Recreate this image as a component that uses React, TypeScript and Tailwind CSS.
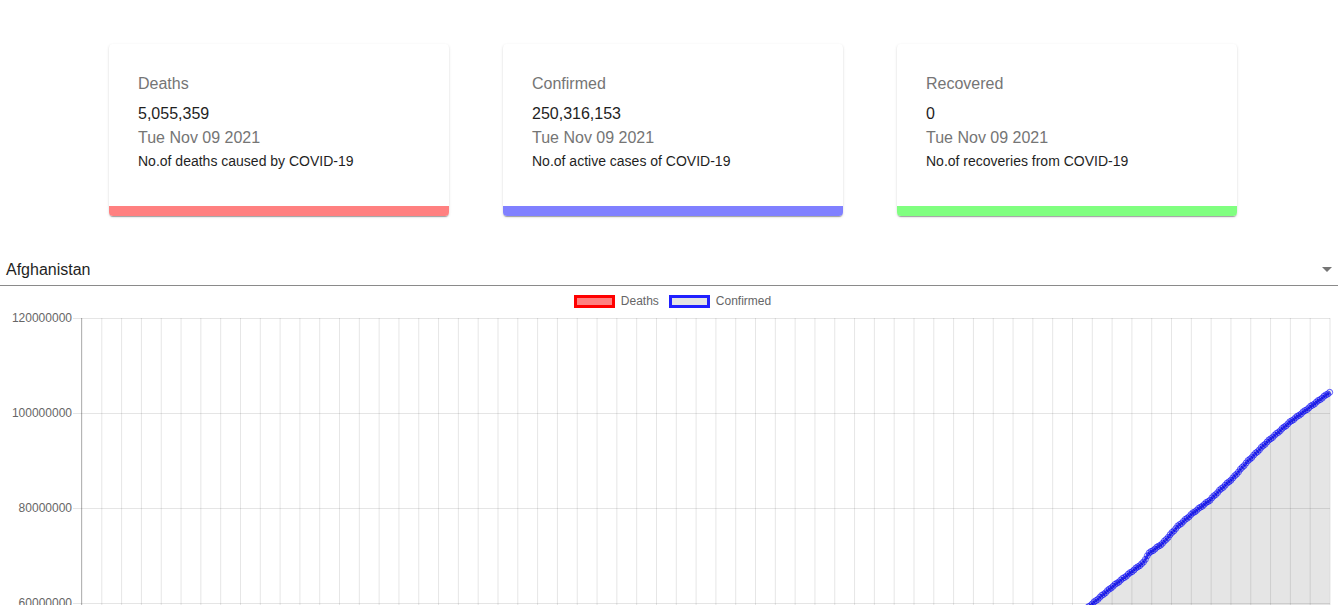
import React from 'react';

const font = { fontFamily: '"Liberation Sans", Arial, sans-serif' };

interface StatCardProps {
  title: string;
  value: string;
  caption: string;
  barClass: string;
}

function StatCard({ title, value, caption, barClass }: StatCardProps) {
  return (
    <div className="w-[340px] bg-white rounded-[4px] overflow-hidden shadow-[0px_2px_1px_-1px_rgba(0,0,0,0.2),0px_1px_1px_0px_rgba(0,0,0,0.14),0px_1px_3px_0px_rgba(0,0,0,0.12)]">
      <div className="pl-[29px] pr-4 pt-[28px] pb-[35px]">
        <div className="text-[16px] leading-[24px] text-[#757575]">{title}</div>
        <div className="mt-[6px] text-[16px] leading-[24px] text-[#1f1f1f]">{value}</div>
        <div className="text-[16px] leading-[24px] text-[#757575]">Tue Nov 09 2021</div>
        <div className="mt-[1px] text-[14px] leading-[20px] text-[#1f1f1f]">{caption}</div>
      </div>
      <div className={`h-[10px] ${barClass}`} />
    </div>
  );
}

// chart geometry (svg starts at page y=307)
const TOP = 307;
const X0 = 82;
const X1 = 1330;
const yFor = (v: number) => 318 - TOP + ((120 - v) / 20) * 95;

// rough trace of the Confirmed series in page coordinates
const trace: [number, number][] = [
  [1020, 665],
  [1060, 630],
  [1092, 604],
  [1112, 587],
  [1130, 573],
  [1144, 562],
  [1148, 554],
  [1163, 543],
  [1177, 527],
  [1193, 513],
  [1210, 500],
  [1220, 490],
  [1233, 478],
  [1247, 462],
  [1267, 442],
  [1290, 422],
  [1310, 407],
  [1330, 392],
];

function samplePoints(step: number) {
  const out: [number, number][] = [];
  for (let x = trace[0][0]; x <= X1 + 0.01; x += step) {
    let i = 0;
    while (i < trace.length - 2 && trace[i + 1][0] < x) i++;
    const [ax, ay] = trace[i];
    const [bx, by] = trace[i + 1];
    const t = (x - ax) / (bx - ax);
    const wobble = Math.sin(x * 0.9) * 0.4;
    out.push([x, ay + (by - ay) * t + wobble - TOP]);
  }
  return out;
}

function Chart() {
  const H = 420;
  const vLines: number[] = [];
  for (let i = 0; i <= 63; i++) vLines.push(X0 + (i * (X1 - X0)) / 63);
  const yTicks = [120, 100, 80, 60, 40, 20];
  const pts = samplePoints(1.9);
  const linePath = pts.map((p, i) => `${i ? 'L' : 'M'}${p[0].toFixed(1)},${p[1].toFixed(1)}`).join(' ');
  const last = pts[pts.length - 1];
  const fillPath = `${linePath} L${last[0].toFixed(1)},${H} L${pts[0][0].toFixed(1)},${H} Z`;

  return (
    <svg width="1342" height={H} viewBox={`0 0 1342 ${H}`} className="block">
      {vLines.map((x, i) => (
        <line key={i} x1={x} x2={x} y1={yFor(120)} y2={H} stroke="rgba(0,0,0,0.1)" strokeWidth="1" />
      ))}
      {yTicks.map((v) => (
        <g key={v}>
          <line x1={73} x2={X1} y1={yFor(v) + 0.5} y2={yFor(v) + 0.5} stroke="rgba(0,0,0,0.1)" strokeWidth="1" />
          <text
            x={72}
            y={yFor(v) + 4}
            textAnchor="end"
            fontSize="12"
            fill="#666"
            style={font}
          >
            {`${v}000000`}
          </text>
        </g>
      ))}
      <line x1={81.5} x2={81.5} y1={yFor(120)} y2={H} stroke="rgba(0,0,0,0.25)" strokeWidth="1" />
      <path d={fillPath} fill="rgba(0,0,0,0.1)" />
      <path d={linePath} fill="none" stroke="rgba(0,0,255,0.7)" strokeWidth="3" />
      {pts.map((p, i) => (
        <circle key={i} cx={p[0]} cy={p[1]} r="3" fill="rgba(0,0,0,0.05)" stroke="rgba(0,0,255,0.6)" strokeWidth="1" />
      ))}
    </svg>
  );
}

export default function App() {
  return (
    <div className="w-[1342px] bg-white overflow-hidden" style={font}>
      <div className="flex justify-center gap-[54px] pt-[44px] pl-[4px]">
        <StatCard title="Deaths" value="5,055,359" caption="No.of deaths caused by COVID-19" barClass="bg-[#ff8080]" />
        <StatCard title="Confirmed" value="250,316,153" caption="No.of active cases of COVID-19" barClass="bg-[#8080ff]" />
        <StatCard title="Recovered" value="0" caption="No.of recoveries from COVID-19" barClass="bg-[#80ff80]" />
      </div>

      {/* country select */}
      <div className="mt-[39px] w-[1338px] relative border-b border-[#8a8a8a]">
        <div className="pl-[6px] pt-[3px] pb-[3px] text-[16px] leading-[24px] text-[#1f1f1f]">Afghanistan</div>
        <svg className="absolute right-[6px] top-[12px]" width="10" height="5" viewBox="0 0 10 5">
          <path d="M0 0 L10 0 L5 5 Z" fill="#757575" />
        </svg>
      </div>

      {/* legend */}
      <div className="flex justify-center items-center gap-[10px] pt-[9px] pl-[3px] h-[21px] text-[12px] leading-[12px] text-[#666]">
        <div className="flex items-center gap-[6px]">
          <span className="w-[41px] h-[13px] border-[3px] border-[#ff0000] bg-[#ff8080]" />
          <span>Deaths</span>
        </div>
        <div className="flex items-center gap-[6px]">
          <span className="w-[41px] h-[13px] border-[3px] border-[#2020ff] bg-[#e4e4e4]" />
          <span>Confirmed</span>
        </div>
      </div>

      <Chart />
    </div>
  );
}
